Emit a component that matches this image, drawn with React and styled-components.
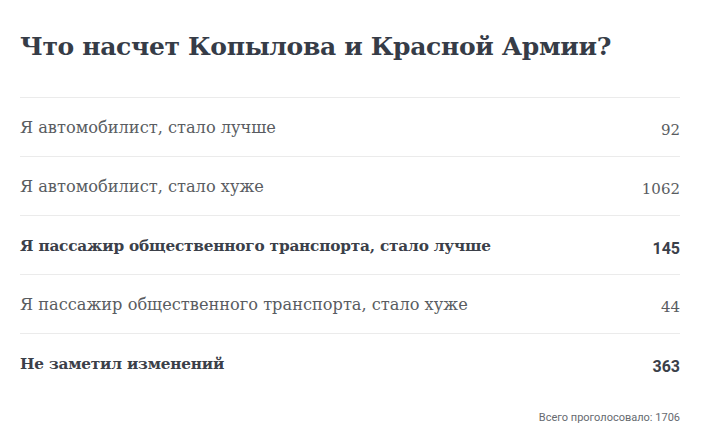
import React from 'react';
import styled, { createGlobalStyle } from 'styled-components';

const GlobalStyle = createGlobalStyle`
  body {
    margin: 0;
    background: #fff;
  }
`;

const Poll = styled.div`
  padding: 27px 24px 0 20px;
  font-family: "DejaVu Serif", "Liberation Serif", serif;
`;

const Title = styled.h2`
  margin: 0 0 30px;
  font-size: 25px;
  line-height: 40px;
  font-weight: bold;
  color: #363c47;
  letter-spacing: -0.35px;
`;

const Row = styled.div`
  display: flex;
  justify-content: space-between;
  align-items: center;
  height: 58px;
  border-top: 1px solid #ebebeb;
`;

const Label = styled.span`
  font-size: ${p => (p.$bold ? '15.3px' : '16.2px')};
  letter-spacing: ${p => (p.$bold ? '-0.2px' : '0')};
  color: ${p => (p.$bold ? '#3b4049' : '#595c61')};
  font-weight: ${p => (p.$bold ? 'bold' : 'normal')};
  margin-top: 1px;
`;

const Count = styled.span`
  font-family: ${p => (p.$bold ? '"Roboto", sans-serif' : '"DejaVu Serif", serif')};
  font-size: ${p => (p.$bold ? '16px' : '15px')};
  font-weight: ${p => (p.$bold ? 'bold' : 'normal')};
  color: ${p => (p.$bold ? '#3b4049' : '#595c61')};
  margin-top: 6px;
`;

const Total = styled.div`
  margin-top: 19px;
  text-align: right;
  font-family: "Roboto", "Liberation Sans", sans-serif;
  font-size: 11px;
  color: #666a70;
`;

const answers = [
  { text: 'Я автомобилист, стало лучше', votes: 92 },
  { text: 'Я автомобилист, стало хуже', votes: 1062 },
  { text: 'Я пассажир общественного транспорта, стало лучше', votes: 145, bold: true },
  { text: 'Я пассажир общественного транспорта, стало хуже', votes: 44 },
  { text: 'Не заметил изменений', votes: 363, bold: true },
];

const App = () => (
  <>
    <GlobalStyle />
    <Poll>
      <Title>Что насчет Копылова и Красной Армии?</Title>
      {answers.map(a => (
        <Row key={a.text}>
          <Label $bold={a.bold}>{a.text}</Label>
          <Count $bold={a.bold}>{a.votes}</Count>
        </Row>
      ))}
      <Total>Всего проголосовало: 1706</Total>
    </Poll>
  </>
);

export default App;
